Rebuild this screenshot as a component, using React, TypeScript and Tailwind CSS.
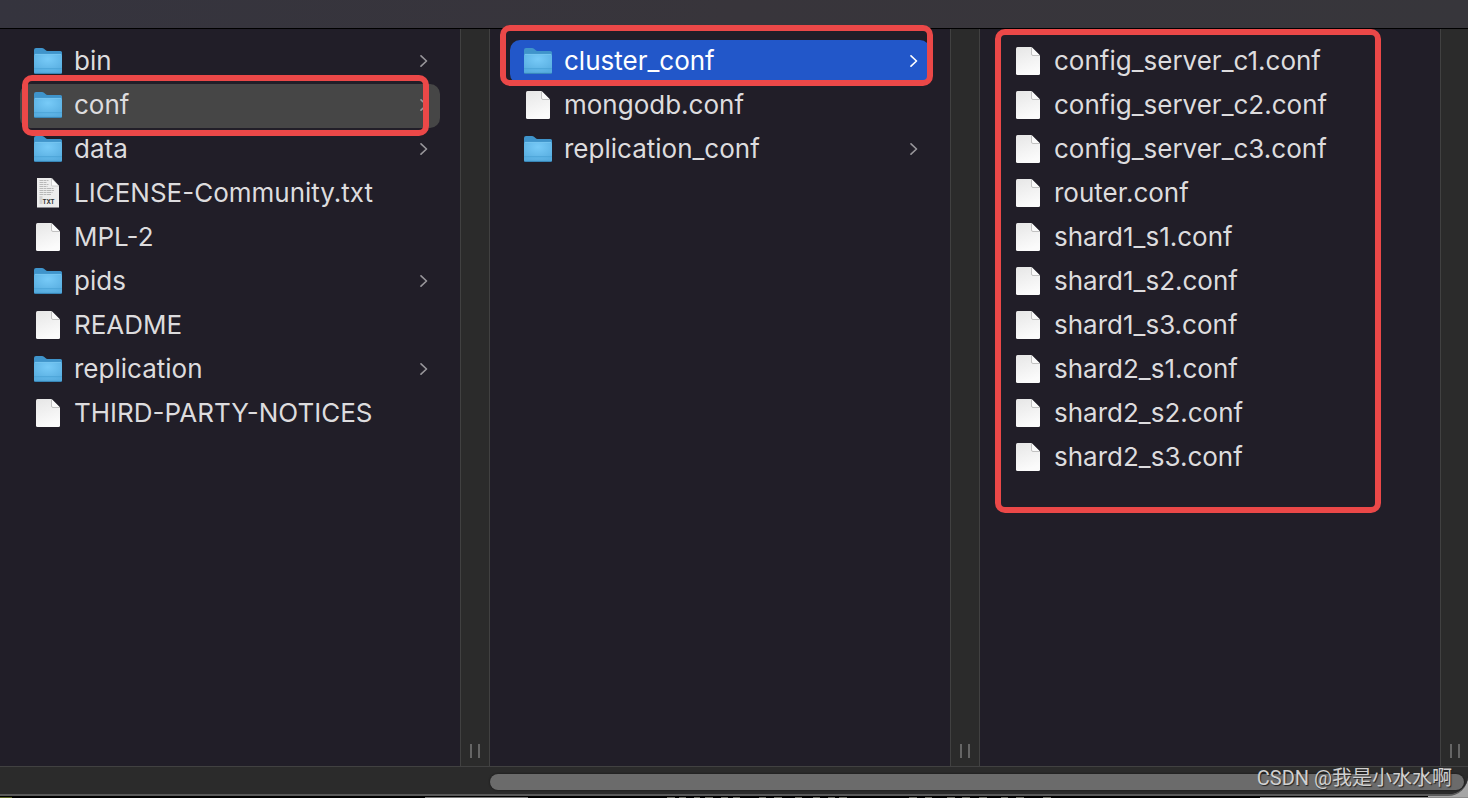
import { clsx } from "clsx";
import { Fragment } from "react";

type EntryKind = "folder" | "file" | "txt";

type Entry = {
  name: string;
  kind: EntryKind;
  selected?: "active" | "inactive";
  marked?: boolean;
};

type FinderColumn = {
  label: string;
  entries: Entry[];
  marked?: boolean;
};

const columns: FinderColumn[] = [
  {
    label: "mongodb",
    entries: [
      { name: "bin", kind: "folder" },
      { name: "conf", kind: "folder", selected: "inactive", marked: true },
      { name: "data", kind: "folder" },
      { name: "LICENSE-Community.txt", kind: "txt" },
      { name: "MPL-2", kind: "file" },
      { name: "pids", kind: "folder" },
      { name: "README", kind: "file" },
      { name: "replication", kind: "folder" },
      { name: "THIRD-PARTY-NOTICES", kind: "file" },
    ],
  },
  {
    label: "conf",
    entries: [
      { name: "cluster_conf", kind: "folder", selected: "active", marked: true },
      { name: "mongodb.conf", kind: "file" },
      { name: "replication_conf", kind: "folder" },
    ],
  },
  {
    label: "cluster_conf",
    marked: true,
    entries: [
      { name: "config_server_c1.conf", kind: "file" },
      { name: "config_server_c2.conf", kind: "file" },
      { name: "config_server_c3.conf", kind: "file" },
      { name: "router.conf", kind: "file" },
      { name: "shard1_s1.conf", kind: "file" },
      { name: "shard1_s2.conf", kind: "file" },
      { name: "shard1_s3.conf", kind: "file" },
      { name: "shard2_s1.conf", kind: "file" },
      { name: "shard2_s2.conf", kind: "file" },
      { name: "shard2_s3.conf", kind: "file" },
    ],
  },
];

function IconDefs() {
  return (
    <svg className="absolute h-0 w-0" aria-hidden="true">
      <defs>
        <radialGradient id="folderFront" cx="0.5" cy="0.25" r="0.75">
          <stop offset="0" stopColor="#78cbf8" />
          <stop offset="1" stopColor="#56acdf" />
        </radialGradient>
        <linearGradient id="paper" x1="0" y1="0" x2="0.3" y2="1">
          <stop offset="0" stopColor="#e6e6e6" />
          <stop offset="1" stopColor="#fbfbfb" />
        </linearGradient>
      </defs>
    </svg>
  );
}

function FolderIcon() {
  return (
    <svg className="h-7 w-7 shrink-0" viewBox="0 0 28 28" aria-hidden="true">
      <path
        d="M0 3Q0 1 2 1h6q1.200 0 2 .8l1.500 1.200q.9.900 2 .9H26.500Q28 3.900 28 5.400V25q0 1.700-1.500 1.700h-25Q0 26.700 0 25Z"
        fill="#3f94cb"
      />
      <path d="M0 8.500Q0 7.200 1.300 7.200h25.400Q28 7.200 28 8.500V25q0 1.500-1.500 1.500h-25Q0 26.500 0 25Z" fill="url(#folderFront)" />
      <path d="M.8 7.400h26.400" stroke="#82d0f8" strokeWidth=".7" />
      <path d="M0 21.700h28" stroke="#479fd3" strokeWidth=".8" />
      <path d="M.4 26.400h27.200" stroke="#3382b5" strokeWidth=".8" />
    </svg>
  );
}

function FileIcon() {
  return (
    <svg className="h-7 w-7 shrink-0" viewBox="0 0 28 28" aria-hidden="true">
      <path d="M3.500 0H17.500L26 8.500V26.500Q26 28 24.500 28h-21Q2 28 2 26.500v-25Q2 0 3.500 0Z" fill="url(#paper)" />
      <path d="M17.500 0v7q0 1.500 1.500 1.500h7Z" fill="#fafafa" />
      <path d="M17.500 0v7q0 1.500 1.500 1.500h7" fill="none" stroke="#b4b4b4" strokeWidth=".8" />
    </svg>
  );
}

function TextFileIcon() {
  return (
    <svg className="h-7 w-7 shrink-0 overflow-visible" viewBox="0 0 28 28" aria-hidden="true">
      <path d="M3-1H17.500L25 7V28.500H3Z" fill="#ededed" />
      <path
        d="M5.500 1.500h9M5.500 3.500h7M5.500 5.500h9M5.500 7.500h8M5.500 9.500h14M5.500 11.500h15M5.500 13.500h13M5.500 15.500h12M5.500 18h3M5.500 20h3M5.500 22h3M5.500 24h3"
        stroke="#b2b2b2"
        strokeWidth=".9"
        strokeDasharray="4 .5 2.500 .5"
      />
      <path d="M17.500-1v7.500q0 .5.5.5H25Z" fill="#fbfbfb" stroke="#b4b4b4" strokeWidth=".6" />
      <text x="14.500" y="25" textAnchor="middle" fontFamily="Inter, sans-serif" fontSize="6" fontWeight="700" fill="#333">
        TXT
      </text>
    </svg>
  );
}

function EntryIcon({ kind }: { kind: EntryKind }) {
  if (kind === "folder") return <FolderIcon />;
  if (kind === "txt") return <TextFileIcon />;
  return <FileIcon />;
}

function EntryRow({ entry }: { entry: Entry }) {
  return (
    <li className="relative">
      <button
        type="button"
        className={clsx(
          "flex h-11 w-full items-center rounded-[10px] pr-3 pb-0.5 pl-3.5 text-left",
          entry.selected === "active" && "bg-[#2257c9] text-white",
          entry.selected === "inactive" && "bg-[#464646]",
        )}
      >
        <EntryIcon kind={entry.kind} />
        <span className="ml-3 flex-1 truncate">{entry.name}</span>
        {entry.kind === "folder" && (
          <svg
            className={clsx("h-3 w-2", entry.selected === "active" ? "text-white" : "text-[#98969b]")}
            viewBox="0 0 8 12"
            fill="none"
            stroke="currentColor"
            strokeWidth="1.600"
            strokeLinecap="round"
            strokeLinejoin="round"
            aria-hidden="true"
          >
            <path d="M1 .8L6.500 6L1 11.200" />
          </svg>
        )}
      </button>
      {entry.marked && (
        <span
          className={clsx(
            "pointer-events-none absolute z-10 rounded-[10px] border-6 border-[#eb4848]",
            entry.selected === "active" ? "-top-[15px] -right-[3px] -bottom-0.5 -left-2.5" : "-top-[9px] right-[11px] -bottom-2 left-0.5",
          )}
        />
      )}
    </li>
  );
}

function Gutter({ last }: { last: boolean }) {
  return (
    <div
      className={clsx(
        "flex shrink-0 items-end justify-center gap-1.5 border-l border-[#414141] bg-[#2b2b2b] pb-2",
        last ? "w-7" : "w-[30px] border-r",
      )}
    >
      <span className="h-3.5 w-0.5 bg-[#656565]" />
      <span className="h-3.5 w-0.5 bg-[#656565]" />
    </div>
  );
}

// Whatever sits behind the window and shows along its bottom edge.
function Backdrop() {
  return (
    <div aria-hidden="true">
      <div className="absolute right-0 bottom-0 h-5 w-10 bg-[#a5a5a5]" />
      <div className="absolute right-0 bottom-0 h-px w-52 bg-[#8a8a8a]" />
      <div className="absolute bottom-0 left-[425px] h-px w-[103px] bg-[#777]" />
      <div className="absolute bottom-0 left-0 h-px w-3 bg-[#566022]" />
      <svg className="absolute bottom-0 left-[667px] h-px w-[388px]" viewBox="0 0 388 1">
        <path
          d="M0 .5h8M12 .5h7M27 .5h6M38 .5h8M54 .5h7M66 .5h7M92 .5h7M107 .5h8M128 .5h7M146 .5h7M161 .5h7M172 .5h8M242 .5h8M258 .5h7M280 .5h8M295 .5h8M312 .5h8M334 .5h7M349 .5h8M376 .5h8"
          stroke="#6d6d66"
        />
      </svg>
    </div>
  );
}

export default function App() {
  return (
    <div className="relative flex min-h-screen flex-col overflow-hidden bg-black pb-0.5 font-['Inter','Liberation_Sans',sans-serif] text-[26px] leading-8 text-[#dddcde]">
      <IconDefs />
      <Backdrop />

      <main className="relative flex flex-1 flex-col overflow-hidden rounded-br-[20px] border-b-2 border-[#5a5a5a] bg-[#211e28]">
        <header className="h-[29px] shrink-0 border-b border-black bg-linear-to-r from-[#35343e] via-[#38353b] to-[#37363b]" />

        <div className="flex flex-1">
          {columns.map((column, index) => (
            <Fragment key={column.label}>
              <section aria-label={column.label} className="relative min-w-0 flex-1 px-5 pt-[11px]">
                <ul>
                  {column.entries.map((entry) => (
                    <EntryRow key={entry.name} entry={entry} />
                  ))}
                </ul>
                {column.marked && (
                  <span className="pointer-events-none absolute top-0 right-[59px] left-[15px] z-10 h-[484px] rounded-[10px] border-6 border-[#eb4848]" />
                )}
              </section>
              <Gutter last={index === columns.length - 1} />
            </Fragment>
          ))}
        </div>

        <div className="flex h-7 shrink-0 border-t border-[#414141] bg-[#2b2b2b] pt-[7px] pr-1">
          <div className="ml-[33.5%] h-4 flex-1 rounded-full bg-[#6b6b6b] shadow-[0_0_2px_#111]" />
        </div>
      </main>

      <p className="absolute right-4 bottom-1 z-20 font-['Roboto','Noto_Sans_CJK_SC',sans-serif] text-xl leading-8 text-[#d0d0d0] [text-shadow:1px_1px_1px_#222]">
        CSDN @我是小水水啊
      </p>
    </div>
  );
}
